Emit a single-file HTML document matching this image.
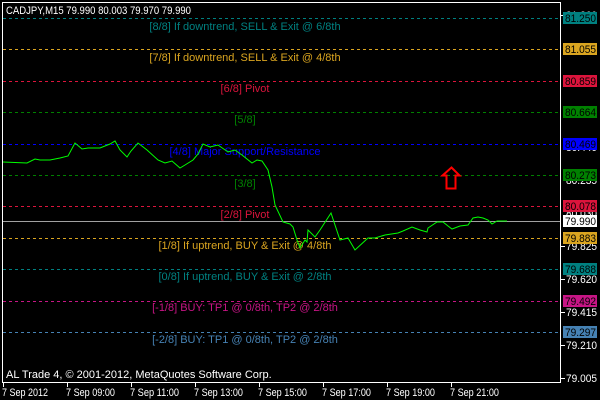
<!DOCTYPE html>
<html><head><style>body{margin:0;background:#000}svg{display:block}</style></head><body>
<svg width="600" height="400" xmlns="http://www.w3.org/2000/svg" font-family="Liberation Sans, sans-serif" font-size="11">
<rect width="600" height="400" fill="#000"/>
<g stroke-dasharray="3,3" stroke-width="1">
<line x1="3" x2="560" y1="18.5" y2="18.5" stroke="#008080"/>
<line x1="3" x2="560" y1="49.5" y2="49.5" stroke="#DAA520"/>
<line x1="3" x2="560" y1="81.5" y2="81.5" stroke="#DC143C"/>
<line x1="3" x2="560" y1="112.5" y2="112.5" stroke="#008000"/>
<line x1="3" x2="560" y1="144.5" y2="144.5" stroke="#0000FF"/>
<line x1="3" x2="560" y1="175.5" y2="175.5" stroke="#008000"/>
<line x1="3" x2="560" y1="206.5" y2="206.5" stroke="#DC143C"/>
<line x1="3" x2="560" y1="238.5" y2="238.5" stroke="#DAA520"/>
<line x1="3" x2="560" y1="269.5" y2="269.5" stroke="#008080"/>
<line x1="3" x2="560" y1="301.5" y2="301.5" stroke="#C71585"/>
<line x1="3" x2="560" y1="332.5" y2="332.5" stroke="#4682B4"/>
</g>
<line x1="3" x2="560" y1="221.5" y2="221.5" stroke="#A0A0A0"/>
<g text-anchor="middle">
<text x="245" y="30" fill="#008080">[8/8] If downtrend, SELL &amp; Exit @ 6/8th</text>
<text x="245" y="61" fill="#DAA520">[7/8] If downtrend, SELL &amp; Exit @ 4/8th</text>
<text x="245" y="92" fill="#DC143C">[6/8] Pivot</text>
<text x="245" y="123" fill="#008000">[5/8]</text>
<text x="245" y="155" fill="#0000FF">[4/8] Major Support/Resistance</text>
<text x="245" y="187" fill="#008000">[3/8]</text>
<text x="245" y="218" fill="#DC143C">[2/8] Pivot</text>
<text x="245" y="249" fill="#DAA520">[1/8] If uptrend, BUY &amp; Exit @ 4/8th</text>
<text x="245" y="280" fill="#008080">[0/8] If uptrend, BUY &amp; Exit @ 2/8th</text>
<text x="245" y="311" fill="#C71585">[-1/8] BUY: TP1 @ 0/8th, TP2 @ 2/8th</text>
<text x="245" y="343" fill="#4682B4">[-2/8] BUY: TP1 @ 0/8th, TP2 @ 2/8th</text>
</g>
<polyline fill="none" stroke="#00FF00" stroke-width="1" points="3,162 27,163 35,159 40,160 50,160 60,158 68,156 75,143 82,149 88,148 100,148 110,144 115,141 120,150 127,157 131,151 138,143 147,150 158,160 165,163 172,161 180,168 185,165 193,160 198,154 203,144 210,147 218,145 228,152 235,150 242,155 252,163 257,160 262,161 268,170 272,187 275,205 283,222 290,224 293,227 297,240 300,248 305,240 307,242 308,230 315,237 320,230 331,213 340,240 348,238 355,250 368,238 375,238 385,235 398,233 403,231 412,227 420,230 427,232 428,228 437,222 443,222 448,226 452,229 460,226 468,225 473,218 478,217 483,218 488,220 492,224 497,221 507,221"/>
<path d="M451.5,167.5 L459.5,175.5 L455.5,175.5 L455.5,188.5 L446.5,188.5 L446.5,175.5 L442.5,175.5 Z" fill="none" stroke="#FF0000" stroke-width="2"/>
<rect x="2.5" y="2.5" width="558" height="380" fill="none" stroke="#fff"/>
<text x="6" y="14" fill="#fff" textLength="185" lengthAdjust="spacingAndGlyphs">CADJPY,M15  79.990 80.003 79.970 79.990</text>
<text x="6" y="378" fill="#fff">AL Trade 4, © 2001-2012, MetaQuotes Software Corp.</text>
<g fill="#fff">
<text x="566" y="19" textLength="31" lengthAdjust="spacingAndGlyphs">81.260</text><text x="566" y="52" textLength="31" lengthAdjust="spacingAndGlyphs">81.055</text><text x="566" y="85" textLength="31" lengthAdjust="spacingAndGlyphs">80.850</text><text x="566" y="118" textLength="31" lengthAdjust="spacingAndGlyphs">80.645</text><text x="566" y="151" textLength="31" lengthAdjust="spacingAndGlyphs">80.440</text><text x="566" y="184" textLength="31" lengthAdjust="spacingAndGlyphs">80.235</text><text x="566" y="217" textLength="31" lengthAdjust="spacingAndGlyphs">80.030</text><text x="566" y="250" textLength="31" lengthAdjust="spacingAndGlyphs">79.825</text><text x="566" y="283" textLength="31" lengthAdjust="spacingAndGlyphs">79.620</text><text x="566" y="316" textLength="31" lengthAdjust="spacingAndGlyphs">79.415</text><text x="566" y="349" textLength="31" lengthAdjust="spacingAndGlyphs">79.210</text><text x="566" y="382" textLength="31" lengthAdjust="spacingAndGlyphs">79.005</text>
</g>
<g stroke="#fff"><line x1="561" x2="565" y1="15.5" y2="15.5"/><line x1="561" x2="565" y1="246.5" y2="246.5"/><line x1="561" x2="565" y1="279.5" y2="279.5"/><line x1="561" x2="565" y1="312.5" y2="312.5"/><line x1="561" x2="565" y1="345.5" y2="345.5"/><line x1="561" x2="565" y1="378.5" y2="378.5"/></g>
<g>
<rect x="563" y="12" width="34" height="12" fill="#008080"/><text x="565" y="22" fill="#000" textLength="31" lengthAdjust="spacingAndGlyphs">81.250</text>
<rect x="563" y="43" width="34" height="12" fill="#DAA520"/><text x="565" y="53" fill="#000" textLength="31" lengthAdjust="spacingAndGlyphs">81.055</text>
<rect x="563" y="75" width="34" height="12" fill="#DC143C"/><text x="565" y="85" fill="#000" textLength="31" lengthAdjust="spacingAndGlyphs">80.859</text>
<rect x="563" y="106" width="34" height="12" fill="#008000"/><text x="565" y="116" fill="#000" textLength="31" lengthAdjust="spacingAndGlyphs">80.664</text>
<rect x="563" y="138" width="34" height="12" fill="#0000FF"/><text x="565" y="148" fill="#000" textLength="31" lengthAdjust="spacingAndGlyphs">80.469</text>
<rect x="563" y="169" width="34" height="12" fill="#008000"/><text x="565" y="179" fill="#000" textLength="31" lengthAdjust="spacingAndGlyphs">80.273</text>
<rect x="563" y="200" width="34" height="12" fill="#DC143C"/><text x="565" y="210" fill="#000" textLength="31" lengthAdjust="spacingAndGlyphs">80.078</text>
<rect x="563" y="215" width="34" height="12" fill="#fff"/><text x="565" y="225" fill="#000" textLength="31" lengthAdjust="spacingAndGlyphs">79.990</text>
<rect x="563" y="232" width="34" height="12" fill="#DAA520"/><text x="565" y="242" fill="#000" textLength="31" lengthAdjust="spacingAndGlyphs">79.883</text>
<rect x="563" y="263" width="34" height="12" fill="#008080"/><text x="565" y="273" fill="#000" textLength="31" lengthAdjust="spacingAndGlyphs">79.688</text>
<rect x="563" y="295" width="34" height="12" fill="#C71585"/><text x="565" y="305" fill="#000" textLength="31" lengthAdjust="spacingAndGlyphs">79.492</text>
<rect x="563" y="326" width="34" height="12" fill="#4682B4"/><text x="565" y="336" fill="#000" textLength="31" lengthAdjust="spacingAndGlyphs">79.297</text>
</g>
<g stroke="#fff"><line x1="3.5" x2="3.5" y1="383" y2="387"/><line x1="67.5" x2="67.5" y1="383" y2="387"/><line x1="131.5" x2="131.5" y1="383" y2="387"/><line x1="195.5" x2="195.5" y1="383" y2="387"/><line x1="259.5" x2="259.5" y1="383" y2="387"/><line x1="323.5" x2="323.5" y1="383" y2="387"/><line x1="387.5" x2="387.5" y1="383" y2="387"/><line x1="451.5" x2="451.5" y1="383" y2="387"/></g>
<g fill="#fff">
<text x="2" y="396" textLength="46" lengthAdjust="spacingAndGlyphs">7 Sep 2012</text><text x="66" y="396" textLength="49" lengthAdjust="spacingAndGlyphs">7 Sep 09:00</text><text x="130" y="396" textLength="49" lengthAdjust="spacingAndGlyphs">7 Sep 11:00</text><text x="194" y="396" textLength="49" lengthAdjust="spacingAndGlyphs">7 Sep 13:00</text><text x="258" y="396" textLength="49" lengthAdjust="spacingAndGlyphs">7 Sep 15:00</text><text x="322" y="396" textLength="49" lengthAdjust="spacingAndGlyphs">7 Sep 17:00</text><text x="386" y="396" textLength="49" lengthAdjust="spacingAndGlyphs">7 Sep 19:00</text><text x="450" y="396" textLength="49" lengthAdjust="spacingAndGlyphs">7 Sep 21:00</text>
</g>
</svg>
</body></html>
